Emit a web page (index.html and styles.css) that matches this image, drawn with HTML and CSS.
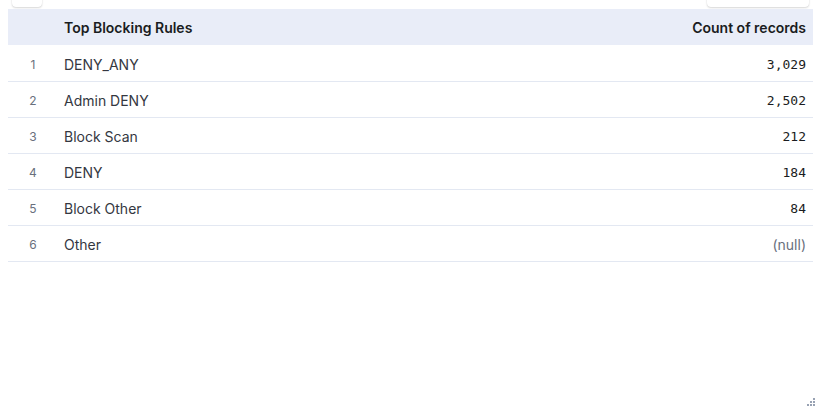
FILE: index.html
```html
<!DOCTYPE html>
<html lang="en">
<head>
    <meta charset="UTF-8">
    <meta name="viewport" content="width=device-width, initial-scale=1.0">
    <title>Top Blocking Rules</title>
    <link rel="stylesheet" href="styles.css">
</head>
<body>
    <div class="panel">
        <div class="toolbar">
            <div class="tool-btn tool-btn-small"></div>
            <div class="tool-btn tool-btn-wide"></div>
        </div>
        <div class="grid">
            <div class="row row-head">
                <div class="cell cell-index"></div>
                <div class="cell cell-name">Top Blocking Rules</div>
                <div class="cell cell-value">Count of records</div>
            </div>
            <div class="row">
                <div class="cell cell-index">1</div>
                <div class="cell cell-name">DENY_ANY</div>
                <div class="cell cell-value num">3,029</div>
            </div>
            <div class="row">
                <div class="cell cell-index">2</div>
                <div class="cell cell-name">Admin DENY</div>
                <div class="cell cell-value num">2,502</div>
            </div>
            <div class="row">
                <div class="cell cell-index">3</div>
                <div class="cell cell-name">Block Scan</div>
                <div class="cell cell-value num">212</div>
            </div>
            <div class="row">
                <div class="cell cell-index">4</div>
                <div class="cell cell-name">DENY</div>
                <div class="cell cell-value num">184</div>
            </div>
            <div class="row">
                <div class="cell cell-index">5</div>
                <div class="cell cell-name">Block Other</div>
                <div class="cell cell-value num">84</div>
            </div>
            <div class="row">
                <div class="cell cell-index">6</div>
                <div class="cell cell-name">Other</div>
                <div class="cell cell-value null">(null)</div>
            </div>
        </div>
        <div class="resize-handle">
            <span class="dot d1"></span>
            <span class="dot d2"></span><span class="dot d3"></span>
            <span class="dot d4"></span><span class="dot d5"></span><span class="dot d6"></span>
        </div>
    </div>
</body>
</html>
```

FILE: styles.css
```css
html, body {
    margin: 0;
    padding: 0;
    background-color: #fff;
}
body {
    font-family: Inter, "Noto Sans", sans-serif;
    font-size: 14px;
    color: #343741;
    width: 821px;
    height: 412px;
    overflow: hidden;
}
.panel {
    position: relative;
    height: 412px;
    padding: 0 8px;
    box-sizing: border-box;
}
.toolbar {
    height: 9px;
    display: flex;
    justify-content: space-between;
    align-items: flex-end;
    padding: 0 4px 0 4px;
    overflow: hidden;
}
.tool-btn {
    height: 20px;
    margin-bottom: 2px;
    background-color: #fff;
    border-radius: 4px;
    box-shadow: 0 1px 2px rgba(0, 0, 0, 0.15), 0 0 1px rgba(0, 0, 0, 0.12);
}
.tool-btn-small {
    width: 30px;
}
.tool-btn-wide {
    width: 102px;
}
.row {
    display: flex;
    align-items: center;
    box-sizing: border-box;
    height: 36px;
    padding-top: 2px;
    border-bottom: 1px solid #e3e8f2;
}
.row-head {
    height: 37px;
    padding-top: 0;
    border-bottom: 1px solid #fff;
    background-color: #e9edf8;
    background-clip: padding-box;
    font-weight: 600;
    color: #1a1c21;
}
.cell-index {
    width: 50px;
    text-align: center;
    font-size: 12px;
    color: #69707d;
}
.cell-name {
    flex: 1;
    padding-left: 6px;
}
.cell-value {
    padding-right: 7px;
    text-align: right;
}
.num {
    font-family: "DejaVu Sans Mono", monospace;
    font-size: 13px;
    color: #1a1c21;
}
.null {
    color: #69707d;
}
.resize-handle {
    position: absolute;
    right: 6px;
    bottom: 6px;
    width: 8px;
    height: 8px;
}
.dot {
    position: absolute;
    width: 2px;
    height: 2px;
    background-color: #98a2b3;
}
.d1 { left: 6px; top: 0; }
.d2 { left: 3px; top: 3px; }
.d3 { left: 6px; top: 3px; }
.d4 { left: 0; top: 6px; }
.d5 { left: 3px; top: 6px; }
.d6 { left: 6px; top: 6px; }
```
